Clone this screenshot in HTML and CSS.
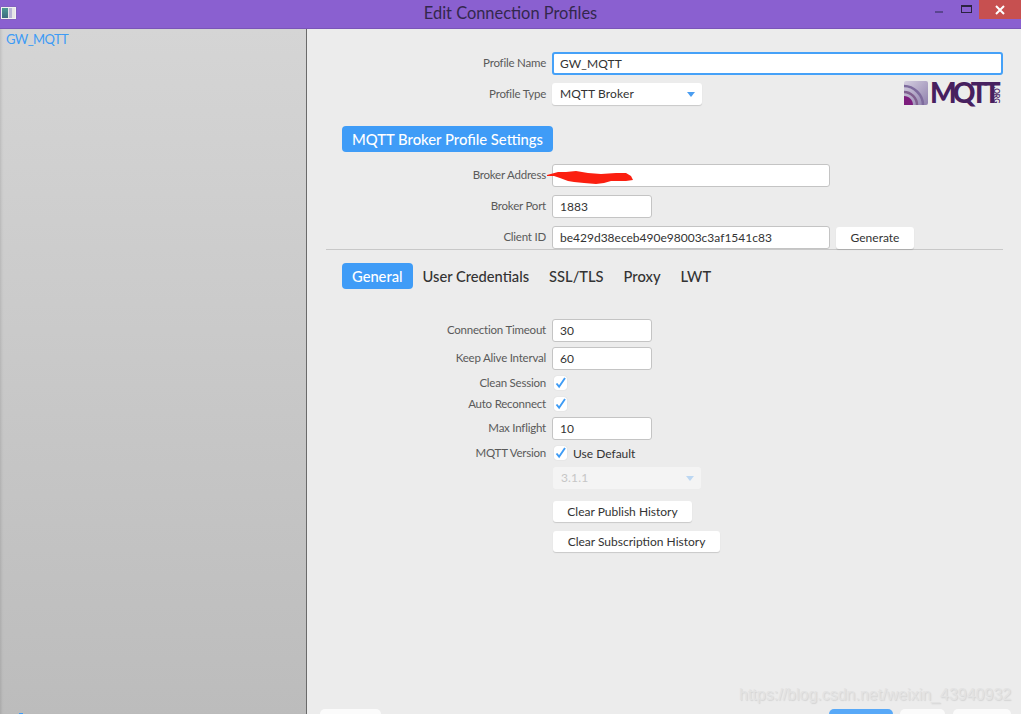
FILE: index.html
```html
<!DOCTYPE html>
<html lang="en">
  <head>
    <meta charset="UTF-8" />
    <title>Edit Connection Profiles</title>
    <link rel="stylesheet" href="styles.css">
  </head>
  <body>
    <div class="titlebar">
      <div class="app-icon"><span class="app-icon-a"></span><span class="app-icon-b"></span></div>
      <div class="title">Edit Connection Profiles</div>
      <div class="win-controls">
        <span class="win-min"></span>
        <span class="win-max"></span>
        <span class="win-close">
          <svg width="12" height="12" viewBox="0 0 12 12"><path d="M2 2l8 8M10 2l-8 8" stroke="#fff" stroke-width="2"/></svg>
        </span>
      </div>
    </div>

    <div class="main">
      <div class="sidebar">
        <div class="profile-item">GW_MQTT</div>
        <span class="sidebar-tick"></span>
      </div>

      <div class="content">
        <div class="row row-name">
          <label>Profile Name</label>
          <input class="field field-focus" type="text" value="GW_MQTT" />
        </div>
        <div class="row row-type">
          <label>Profile Type</label>
          <div class="select">MQTT Broker<span class="arrow"></span></div>
          <div class="logo">
            <svg class="logo-mark" width="24" height="24" viewBox="0 0 24 24">
              <defs>
                <linearGradient id="waves" x1="0" y1="0" x2="1" y2="1">
                  <stop offset="0" stop-color="#d5cfe0"/>
                  <stop offset="1" stop-color="#8f80ad"/>
                </linearGradient>
              </defs>
              <rect width="24" height="24" rx="2" fill="url(#waves)"/>
              <path d="M0 5c10 0 19 9 19 19" fill="none" stroke="#7e6b9d" stroke-width="2.5"/>
              <path d="M0 11c7 0 13 6 13 13" fill="none" stroke="#80608f" stroke-width="2.5"/>
              <path d="M0 15c5 0 9 4 9 9H0z" fill="#7d1d7d"/>
            </svg>
            <span class="logo-text">MQTT</span>
            <span class="logo-org">.ORG</span>
          </div>
        </div>

        <div class="badge-wrap"><span class="badge">MQTT Broker Profile Settings</span></div>

        <div class="row row-address">
          <label>Broker Address</label>
          <input class="field field-wide" type="text" />
        </div>
        <div class="row row-port">
          <label>Broker Port</label>
          <input class="field field-short" type="text" value="1883" />
        </div>
        <div class="row row-client">
          <label>Client ID</label>
          <input class="field field-wide" type="text" value="be429d38eceb490e98003c3af1541c83" />
          <button class="btn btn-generate">Generate</button>
        </div>

        <div class="tabs">
          <span class="tab tab-active">General</span>
          <span class="tab">User Credentials</span>
          <span class="tab">SSL/TLS</span>
          <span class="tab">Proxy</span>
          <span class="tab">LWT</span>
        </div>

        <div class="row row-timeout">
          <label>Connection Timeout</label>
          <input class="field field-short" type="text" value="30" />
        </div>
        <div class="row row-keep">
          <label>Keep Alive Interval</label>
          <input class="field field-short" type="text" value="60" />
        </div>
        <div class="row row-check row-clean">
          <label>Clean Session</label>
          <span class="check"><svg width="13" height="14" viewBox="0 0 13 14"><path d="M2.5 7.5l2.6 3.2L11 2" fill="none" stroke="#3d9bf5" stroke-width="1.9"/></svg></span>
        </div>
        <div class="row row-check row-auto">
          <label>Auto Reconnect</label>
          <span class="check"><svg width="13" height="14" viewBox="0 0 13 14"><path d="M2.5 7.5l2.6 3.2L11 2" fill="none" stroke="#3d9bf5" stroke-width="1.9"/></svg></span>
        </div>
        <div class="row row-inflight">
          <label>Max Inflight</label>
          <input class="field field-short" type="text" value="10" />
        </div>
        <div class="row row-check row-version">
          <label>MQTT Version</label>
          <span class="check"><svg width="13" height="14" viewBox="0 0 13 14"><path d="M2.5 7.5l2.6 3.2L11 2" fill="none" stroke="#3d9bf5" stroke-width="1.9"/></svg></span>
          <span class="check-text">Use Default</span>
        </div>
        <div class="select select-off">3.1.1<span class="arrow"></span></div>
        <button class="btn btn-block btn-publish">Clear Publish History</button>
        <button class="btn btn-block btn-sub">Clear Subscription History</button>

        <div class="footer">
          <span class="foot-btn foot-left"></span>
          <span class="foot-spacer"></span>
          <span class="foot-btn foot-primary"></span>
          <span class="foot-btn foot-cancel"></span>
          <span class="foot-btn foot-close"></span>
        </div>
      </div>
    </div>

    <!-- red scribble over the address field -->
    <svg class="scribble" width="90" height="20" viewBox="0 0 90 20">
      <path d="M1 7l11-3 8 0 10-1 12 2 13 1 15-1 10 0 5 3 2 4-7 1-15 0-7 2-8 1-12-1-10-1-6-1-8-3-6-2-7 0z" fill="#fb1f10"/>
    </svg>
    <div class="watermark">https://blog.csdn.net/weixin_43940932</div>
  </body>
</html>
```

FILE: styles.css
```css
* {
  margin: 0;
  padding: 0;
  box-sizing: border-box;
  font-family: "Lato", "Open Sans", sans-serif;
}

body {
  width: 1021px;
  height: 714px;
  overflow: hidden;
  position: relative;
  background-color: #ececec;
  color: #333;
}

.titlebar {
  height: 29px;
  background-color: #8a60d0;
  border-bottom: 1px solid #7a55b8;
  display: flex;
  align-items: flex-start;
  position: relative;
}

.app-icon {
  width: 15px;
  height: 12px;
  margin: 7px 0 0 1px;
  background-color: #e6e6e6;
  border: 1px solid #f2f2f2;
  box-shadow: 0 0 1px #666;
  display: flex;
}

.app-icon-a {
  width: 6px;
  background: linear-gradient(#4d9a94, #3d6a80);
}

.app-icon-b {
  width: 3px;
  margin-left: 1px;
  background-color: #b9b5d6;
}

.title {
  position: absolute;
  left: 0;
  right: 0;
  top: 4px;
  text-align: center;
  font-size: 16.4px;
  line-height: 18px;
  color: #33274d;
}

.win-controls {
  margin-left: auto;
  display: flex;
  align-items: flex-start;
}

.win-min {
  width: 8px;
  height: 2px;
  background-color: #5a4590;
  margin: 11px 18px 0 0;
}

.win-max {
  width: 11px;
  height: 8px;
  border: 1px solid #2b2340;
  border-top-width: 2px;
  margin: 5px 7px 0 0;
}

.win-close {
  width: 42px;
  height: 19px;
  background-color: #c75050;
  display: flex;
  align-items: center;
  justify-content: center;
}

.main {
  display: flex;
  height: 685px;
}

.sidebar {
  width: 307px;
  border-right: 1px solid #6a6a6a;
  background: linear-gradient(#d5d5d5, #bcbcbc);
  box-shadow: inset 3px 0 3px -2px rgba(0, 0, 0, 0.12);
  position: relative;
}

.profile-item {
  padding: 2px 0 0 6px;
  font-size: 13px;
  letter-spacing: -0.6px;
  line-height: 17px;
  color: #3d9bf5;
}

.sidebar-tick {
  position: absolute;
  left: 19px;
  bottom: 0;
  width: 4px;
  height: 1px;
  background-color: #3d9bf5;
}

.content {
  flex: 1;
  padding: 0 18px 0 19px;
  display: flex;
  flex-direction: column;
  align-items: flex-start;
}

.row {
  display: flex;
  align-items: center;
  width: 100%;
}

.row label {
  width: 221px;
  margin-right: 5px;
  margin-bottom: 2px;
  padding-right: 1px;
  text-align: right;
  font-size: 11.5px;
  letter-spacing: -0.22px;
  color: #5a5a5a;
}

.field {
  height: 23px;
  padding: 0 7px;
  background-color: #fff;
  border: 1px solid #c4c4c4;
  border-radius: 3px;
  font-size: 12px;
  color: #333;
  outline: none;
}

.field-wide {
  width: 278px;
}

.field-short {
  width: 100px;
}

.field-focus {
  flex: 1;
  border: 2px solid #45a1f8;
  padding: 0 6px;
  letter-spacing: 0.1px;
}

.select {
  position: relative;
  width: 150px;
  height: 22px;
  line-height: 22px;
  padding-left: 8px;
  background-color: #fff;
  border-radius: 3px;
  box-shadow: 0 1px 1px rgba(0, 0, 0, 0.15);
  font-size: 12px;
  letter-spacing: 0.15px;
}

.arrow {
  position: absolute;
  right: 7px;
  top: 9px;
  border-left: 4px solid transparent;
  border-right: 4px solid transparent;
  border-top: 5px solid #4a9df0;
}

.select-off {
  width: 148px;
  margin: 7px 0 0 227px;
  background-color: #f4f4f4;
  box-shadow: none;
  color: #c6c6c6;
}

.select-off .arrow {
  border-top-color: #bcd7f2;
}

.logo {
  margin: -1px 0 1px auto;
  display: flex;
  align-items: center;
  position: relative;
  width: 99px;
  height: 24px;
}

.logo-mark {
  flex-shrink: 0;
}

.logo-text {
  margin: 0 0 2px 2px;
  font-size: 28px;
  line-height: 22px;
  font-weight: 900;
  letter-spacing: -4px;
  color: #47205f;
}

.logo-org {
  position: absolute;
  right: -3px;
  bottom: 6px;
  font-size: 7px;
  line-height: 8px;
  font-weight: 700;
  color: #47205f;
  transform: rotate(90deg);
}

.row-name {
  padding-top: 23px;
}

.row-type {
  margin-top: 7px;
}

.badge-wrap {
  margin: 20px 0 0 16px;
  display: flex;
}

.badge,
.tab-active {
  background-color: #3f9cf7;
  color: #fff;
  border-radius: 4px;
}

.badge {
  height: 26px;
  line-height: 27px;
  padding: 0 10px;
  font-size: 14.8px;
  font-weight: 500;
}

.row-address {
  margin-top: 12px;
}

.row-port {
  margin-top: 8px;
}

.row-client {
  margin-top: 8px;
  border-bottom: 1px solid #c8c8c8;
}

.btn {
  height: 22px;
  background-color: #fff;
  border: none;
  border-radius: 3px;
  box-shadow: 0 1px 1px rgba(0, 0, 0, 0.15);
  font-size: 12px;
  color: #333;
  padding: 0 14px;
}

.btn-generate {
  width: 78px;
  margin-left: 6px;
}

.tabs {
  display: flex;
  align-items: center;
  margin: 13px 0 0 16px;
  font-size: 14.7px;
  font-weight: 500;
  color: #333;
}

.tab {
  line-height: 26px;
  padding: 0 10px;
}

.row-timeout {
  margin-top: 30px;
}

.row-keep {
  margin-top: 5px;
}

.row-clean {
  margin-top: 6px;
}

.row-auto {
  margin-top: 7px;
}

.row-inflight {
  margin-top: 6px;
}

.row-version {
  margin-top: 6px;
}

.row-check {
  height: 14px;
}

.check {
  width: 13px;
  height: 14px;
  margin-left: 2px;
  background-color: #fff;
  border-radius: 3px;
  box-shadow: 0 0 1px rgba(0, 0, 0, 0.2);
  display: flex;
}

.check-text {
  margin-left: 6px;
  font-size: 12px;
}

.btn-block {
  height: 21px;
  margin-left: 227px;
}

.btn-publish {
  width: 139px;
  margin-top: 12px;
}

.btn-sub {
  width: 167px;
  margin-top: 9px;
}

.footer {
  margin-top: auto;
  margin-left: -6px;
  width: calc(100% + 14px);
  display: flex;
  gap: 7px;
  height: 5px;
  overflow: hidden;
}

.foot-btn {
  height: 22px;
  background-color: #fff;
  border-radius: 5px;
  opacity: 0.8;
}

.foot-spacer {
  flex: 1;
}

.foot-left {
  width: 61px;
}

.foot-primary {
  width: 64px;
  background-color: #58a9f8;
  opacity: 1;
}

.foot-cancel {
  width: 45px;
}

.foot-close {
  width: 58px;
  margin-left: 1px;
}

.scribble {
  position: absolute;
  left: 546px;
  top: 168px;
}

.watermark {
  position: absolute;
  left: 739px;
  top: 685px;
  font-family: "Liberation Sans", sans-serif;
  font-size: 16px;
  line-height: 20px;
  color: #e3e3e3;
  text-shadow: 1px 1px 1px #d4d4d4;
}
```
